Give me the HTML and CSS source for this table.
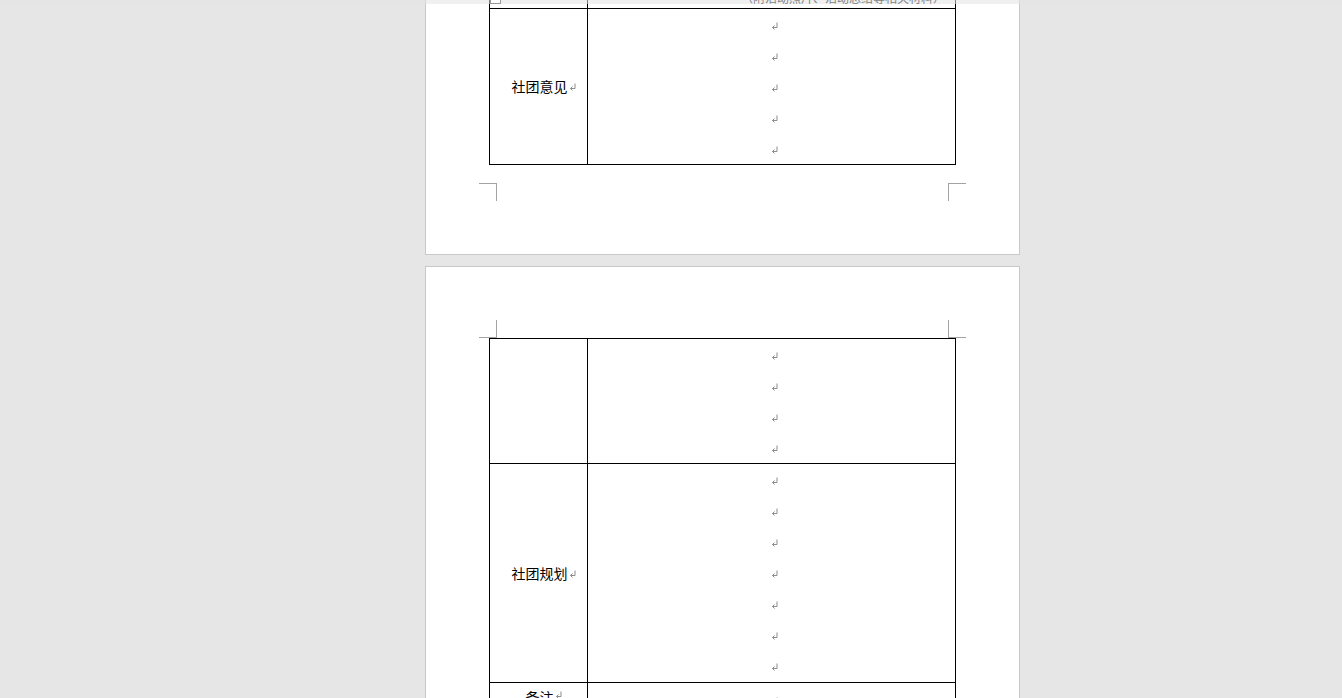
FILE: index.html
```html
<!DOCTYPE html>
<html lang="zh-CN">
<head>
<meta charset="utf-8">
<title>社团申请表</title>
<link rel="stylesheet" href="styles.css">
</head>
<body>
<div class="topband"></div>
<div class="doc">
  <section class="page page-one">
    <div class="tbl">
      <span class="handle"></span>
      <div class="row row-a">
        <div class="cell"></div>
        <div class="cell cell-note"><span class="note">（附活动照片、活动总结等相关材料）</span></div>
      </div>
      <div class="row row-5">
        <div class="cell label"><span>社团意见</span><svg class="pm" viewBox="0 0 7 8"><path d="M6 0.5V5.5H1.5M3.5 3.5L1.5 5.5L3.5 7.5"/></svg></div>
        <div class="cell lines">
          <div class="ln"><svg class="pm" viewBox="0 0 7 8"><path d="M6 0.5V5.5H1.5M3.5 3.5L1.5 5.5L3.5 7.5"/></svg></div>
          <div class="ln"><svg class="pm" viewBox="0 0 7 8"><path d="M6 0.5V5.5H1.5M3.5 3.5L1.5 5.5L3.5 7.5"/></svg></div>
          <div class="ln"><svg class="pm" viewBox="0 0 7 8"><path d="M6 0.5V5.5H1.5M3.5 3.5L1.5 5.5L3.5 7.5"/></svg></div>
          <div class="ln"><svg class="pm" viewBox="0 0 7 8"><path d="M6 0.5V5.5H1.5M3.5 3.5L1.5 5.5L3.5 7.5"/></svg></div>
          <div class="ln"><svg class="pm" viewBox="0 0 7 8"><path d="M6 0.5V5.5H1.5M3.5 3.5L1.5 5.5L3.5 7.5"/></svg></div>
        </div>
      </div>
    </div>
    <div class="marks marks-bottom">
      <span class="mk mk-bl"></span>
      <span class="mk mk-br"></span>
    </div>
  </section>

  <section class="page page-two">
    <div class="marks marks-top">
      <span class="mk mk-tl"></span>
      <span class="mk mk-tr"></span>
    </div>
    <div class="tbl">
      <div class="row row-4">
        <div class="cell label"></div>
        <div class="cell lines">
          <div class="ln"><svg class="pm" viewBox="0 0 7 8"><path d="M6 0.5V5.5H1.5M3.5 3.5L1.5 5.5L3.5 7.5"/></svg></div>
          <div class="ln"><svg class="pm" viewBox="0 0 7 8"><path d="M6 0.5V5.5H1.5M3.5 3.5L1.5 5.5L3.5 7.5"/></svg></div>
          <div class="ln"><svg class="pm" viewBox="0 0 7 8"><path d="M6 0.5V5.5H1.5M3.5 3.5L1.5 5.5L3.5 7.5"/></svg></div>
          <div class="ln"><svg class="pm" viewBox="0 0 7 8"><path d="M6 0.5V5.5H1.5M3.5 3.5L1.5 5.5L3.5 7.5"/></svg></div>
        </div>
      </div>
      <div class="row row-7">
        <div class="cell label"><span>社团规划</span><svg class="pm" viewBox="0 0 7 8"><path d="M6 0.5V5.5H1.5M3.5 3.5L1.5 5.5L3.5 7.5"/></svg></div>
        <div class="cell lines">
          <div class="ln"><svg class="pm" viewBox="0 0 7 8"><path d="M6 0.5V5.5H1.5M3.5 3.5L1.5 5.5L3.5 7.5"/></svg></div>
          <div class="ln"><svg class="pm" viewBox="0 0 7 8"><path d="M6 0.5V5.5H1.5M3.5 3.5L1.5 5.5L3.5 7.5"/></svg></div>
          <div class="ln"><svg class="pm" viewBox="0 0 7 8"><path d="M6 0.5V5.5H1.5M3.5 3.5L1.5 5.5L3.5 7.5"/></svg></div>
          <div class="ln"><svg class="pm" viewBox="0 0 7 8"><path d="M6 0.5V5.5H1.5M3.5 3.5L1.5 5.5L3.5 7.5"/></svg></div>
          <div class="ln"><svg class="pm" viewBox="0 0 7 8"><path d="M6 0.5V5.5H1.5M3.5 3.5L1.5 5.5L3.5 7.5"/></svg></div>
          <div class="ln"><svg class="pm" viewBox="0 0 7 8"><path d="M6 0.5V5.5H1.5M3.5 3.5L1.5 5.5L3.5 7.5"/></svg></div>
          <div class="ln"><svg class="pm" viewBox="0 0 7 8"><path d="M6 0.5V5.5H1.5M3.5 3.5L1.5 5.5L3.5 7.5"/></svg></div>
        </div>
      </div>
      <div class="row row-last">
        <div class="cell label label-top"><span>备注</span><svg class="pm" viewBox="0 0 7 8"><path d="M6 0.5V5.5H1.5M3.5 3.5L1.5 5.5L3.5 7.5"/></svg></div>
        <div class="cell lines lines-top">
          <div class="ln"><svg class="pm" viewBox="0 0 7 8"><path d="M6 0.5V5.5H1.5M3.5 3.5L1.5 5.5L3.5 7.5"/></svg></div>
          <div class="ln"><svg class="pm" viewBox="0 0 7 8"><path d="M6 0.5V5.5H1.5M3.5 3.5L1.5 5.5L3.5 7.5"/></svg></div>
        </div>
      </div>
    </div>
  </section>
</div>
</body>
</html>
```

FILE: styles.css
```css
html, body {
  margin: 0;
  padding: 0;
}

body {
  background: #e6e6e6;
  height: 698px;
  overflow: hidden;
  position: relative;
  font-family: "Noto Sans CJK SC", "Liberation Sans", sans-serif;
  color: #000;
}

.topband {
  position: absolute;
  top: 0;
  left: 0;
  right: 0;
  height: 4px;
  background: rgba(228, 228, 228, 0.55);
  z-index: 5;
}

.doc {
  display: flex;
  flex-direction: column;
  gap: 11px;
  padding-left: 425px;
  margin-top: -60px;
}

.page {
  width: 595px;
  box-sizing: border-box;
  background: #fff;
  border: 1px solid #c9c9c9;
  display: flex;
  flex-direction: column;
}

.page-one {
  padding: 20px 0 53px;
}

.page-two {
  padding: 53px 0 0;
  height: 520px;
}

.tbl {
  position: relative;
  margin-left: 63px;
  width: 467px;
  box-sizing: border-box;
  border-left: 1px solid #000;
  border-top: 1px solid #000;
}

.handle {
  position: absolute;
  left: 0;
  top: 31px;
  width: 11px;
  height: 11px;
  box-sizing: border-box;
  border: 1px solid #9a9a9a;
  background: #fff;
  z-index: 6;
}

.row {
  display: grid;
  grid-template-columns: 98px 368px;
}

.row-a { height: 47px; }
.row-5 { height: 156px; }
.row-4 { height: 125px; }
.row-7 { height: 219px; }
.row-last { height: 200px; }

.cell {
  box-sizing: border-box;
  border-right: 1px solid #000;
  border-bottom: 1px solid #000;
}

.cell-note {
  display: flex;
  align-items: flex-end;
  justify-content: flex-end;
  padding: 0 10px 3px 0;
}

.note {
  font-size: 12px;
  line-height: 14px;
  color: #000;
  white-space: nowrap;
}

.label {
  display: flex;
  align-items: center;
  justify-content: center;
  padding-left: 10px;
  padding-bottom: 1px;
  font-size: 14px;
  line-height: 16px;
}

.label-top {
  align-items: flex-start;
  padding-top: 6px;
}

.label .pm {
  margin-left: 1px;
  margin-top: 2px;
}

.lines {
  display: flex;
  flex-direction: column;
  padding-left: 6px;
}

.lines-top .ln {
  flex: 0 0 31px;
}

.ln {
  flex: 1;
  display: flex;
  align-items: center;
  justify-content: center;
  padding-top: 2px;
}

.pm {
  width: 7px;
  height: 8px;
  flex: none;
  fill: none;
  stroke: #8c8c8c;
  stroke-width: 1;
}

.marks {
  display: flex;
  justify-content: space-between;
  padding: 0 53px;
  height: 18px;
}

.marks-bottom {
  margin-top: 18px;
}

.mk {
  width: 18px;
  height: 18px;
  box-sizing: border-box;
  border: 0 solid #a3a3a3;
}

.mk-bl { border-top-width: 1px; border-right-width: 1px; }
.mk-br { border-top-width: 1px; border-left-width: 1px; }
.mk-tl { border-bottom-width: 1px; border-right-width: 1px; }
.mk-tr { border-bottom-width: 1px; border-left-width: 1px; }
```
